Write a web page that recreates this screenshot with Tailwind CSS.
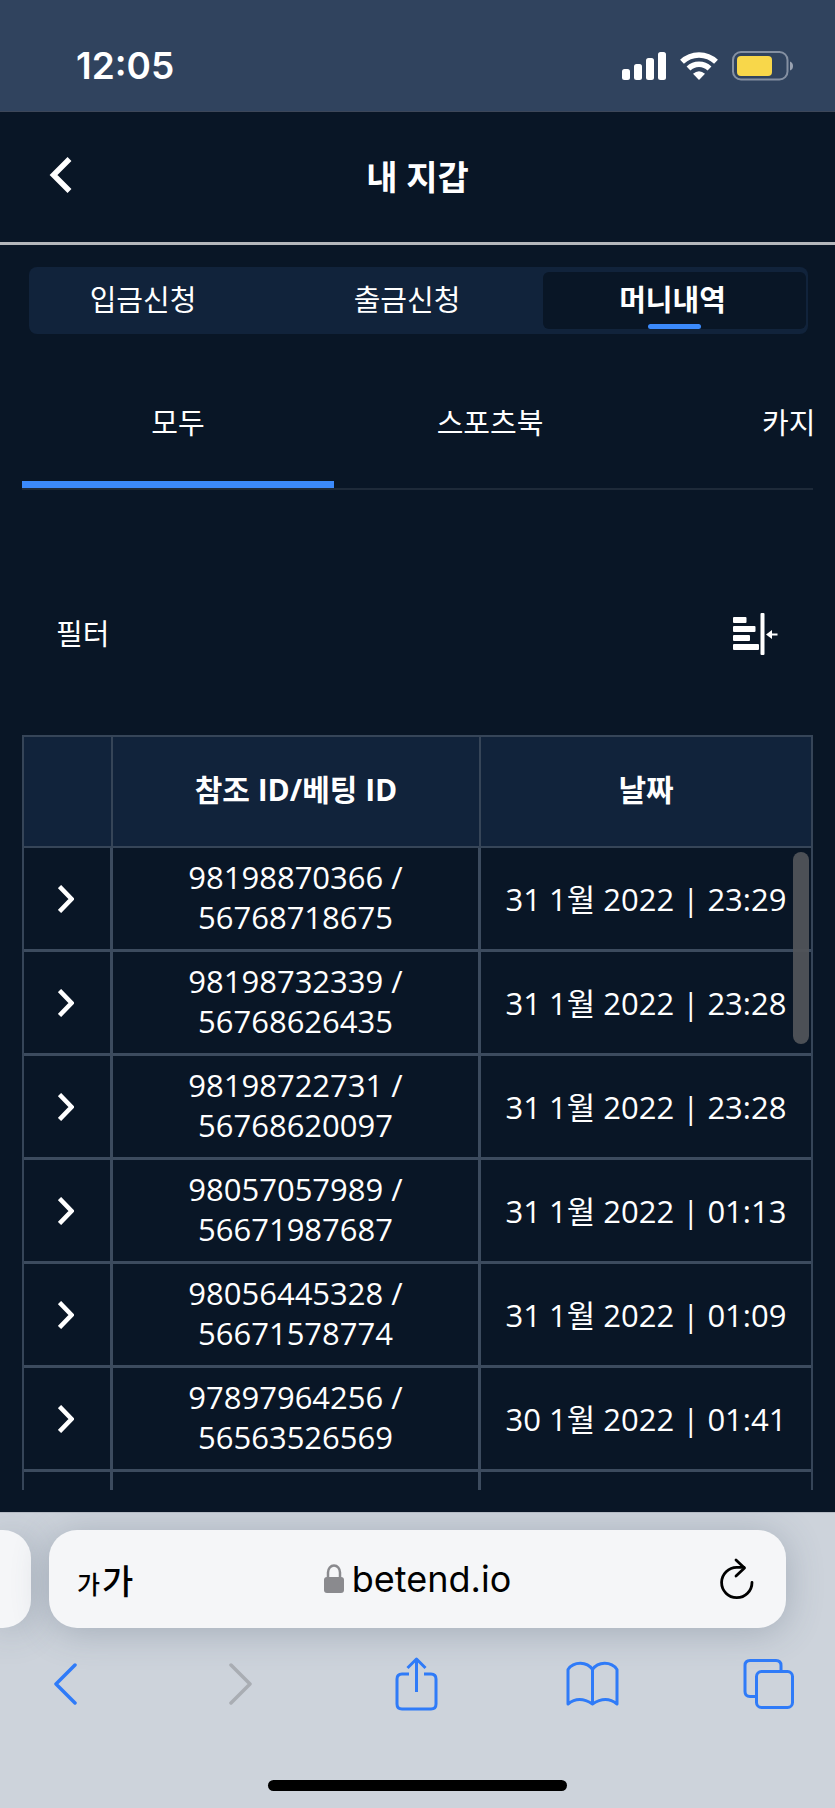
<!DOCTYPE html>
<html lang="ko">
<head>
    <meta charset="UTF-8">
    <meta name="viewport" content="width=device-width, initial-scale=1.0">
    <title>내 지갑</title>
    <script src="https://cdn.jsdelivr.net/npm/@tailwindcss/browser@4"></script>
</head>
<body class="h-screen flex flex-col overflow-hidden bg-[#091626] text-white font-['Open_Sans','Noto_Sans_CJK_KR',sans-serif]">
    <!-- status bar -->
    <div class="h-28 shrink-0 flex items-center justify-between bg-[#30435e] border-b border-[#3d4759] pl-19 pr-[41px] pt-5">
        <span class="font-['Inter',sans-serif] font-semibold text-[37px] leading-11">12:05</span>
        <div class="flex items-center gap-3.5">
            <svg class="w-11 h-7" viewBox="0 0 44 28" fill="#fff">
                <rect x="0" y="17" width="8" height="11" rx="2.500"/>
                <rect x="12" y="12" width="8" height="16" rx="2.500"/>
                <rect x="24" y="6" width="8" height="22" rx="2.500"/>
                <rect x="36" y="0" width="8" height="28" rx="2.500"/>
            </svg>
            <svg class="w-[38px] h-7" viewBox="0 0 38 28" fill="none" stroke="#fff" stroke-width="5.500">
                <path d="M2 9.800a24.500 24.500 0 0 1 34 0"/>
                <path d="M8.500 16.500a15 15 0 0 1 21 0"/>
                <path d="M19 28l-6-6.300q6-5 12 0z" fill="#fff" stroke="none"/>
            </svg>
            <svg class="w-[62px] h-[30px]" viewBox="0 0 62 30" fill="none">
                <rect x="1" y="1" width="54.500" height="27.500" rx="8" stroke="#8490a2" stroke-width="2"/>
                <rect x="5" y="5" width="35" height="20" rx="4" fill="#f8d74a"/>
                <path d="M58 10.500q3 1 3 4.500t-3 4.500z" fill="#9aa3b2"/>
            </svg>
        </div>
    </div>

    <header class="h-[133px] shrink-0 grid grid-cols-[1fr_auto_1fr] items-center border-b-3 border-[#b4b7bb] px-12">
        <button type="button" aria-label="뒤로" class="justify-self-start pb-1">
            <svg class="w-6 h-9" viewBox="0 0 24 36" fill="none" stroke="#fff" stroke-width="5.500"><path d="M21.500 2L5.500 18l16 16"/></svg>
        </button>
        <h1 class="text-[34px] leading-12 font-bold">내 지갑</h1>
    </header>

    <main class="flex-1 min-h-0 flex flex-col px-[22px] pt-[22px] pb-[22px]">
        <nav class="shrink-0 grid grid-cols-[1fr_1fr_263px] h-[67px] ml-[7px] mr-[5px] p-0.5 rounded-lg bg-[#11233b] text-[29px]">
            <button type="button" class="pr-8 pb-0.5">입금신청</button>
            <button type="button" class="pr-4 pb-0.5">출금신청</button>
            <button type="button" class="relative my-[3px] pr-1 pb-0.5 rounded-md bg-[#091626] font-bold">머니내역
                <span class="absolute bottom-0 inset-x-0 mx-auto w-[53px] h-[5px] rounded-sm bg-[#3b8afc]"></span>
            </button>
        </nav>

        <div class="shrink-0 mt-11 h-28 flex overflow-hidden border-b-2 border-[#1e2a39] text-[29px]">
            <button type="button" class="w-[312px] shrink-0 pb-3.5 border-b-7 border-[#3b8afc]">모두</button>
            <button type="button" class="w-[312px] shrink-0 pb-5">스포츠북</button>
            <button type="button" class="w-[312px] shrink-0 pb-5">카지노</button>
        </div>

        <div class="shrink-0 h-[245px] flex items-center justify-between pl-[34px] pr-[35px] pt-[42px]">
            <span class="text-[29px]">필터</span>
            <button type="button" aria-label="필터">
                <svg class="w-[45px] h-[42px]" viewBox="0 0 45 42" fill="#fff">
                    <rect x="0" y="4" width="13.500" height="6" rx="1"/>
                    <rect x="0" y="13" width="22.500" height="6" rx="1"/>
                    <rect x="0" y="22" width="17" height="6" rx="1"/>
                    <rect x="0" y="31" width="26" height="6" rx="1"/>
                    <rect x="27.500" y="0" width="4" height="42" rx="1"/>
                    <path d="M33 21.500l6-4.500v3.500h5.500v2H39v3.500z"/>
                </svg>
            </button>
        </div>

        <div class="relative flex-1 min-h-0 overflow-hidden border-2 border-b-0 border-[#364558]">
            <table class="w-full table-fixed border-separate border-spacing-0 text-[31px] leading-10 text-center">
                <colgroup>
                    <col class="w-[89px]">
                    <col class="w-[368px]">
                    <col>
                </colgroup>
                <thead class="bg-[#11233b] text-[30px]">
                    <tr>
                        <th class="h-[111px] border-r-2 border-b-2 border-[#364558]"></th>
                        <th class="border-r-2 border-b-2 border-[#364558] pb-1 font-bold">참조 ID/베팅 ID</th>
                        <th class="border-b-2 border-[#364558] pb-1 font-bold">날짜</th>
                    </tr>
                </thead>
                <tbody id="history"></tbody>
            </table>
            <!-- scroll thumb -->
            <div class="absolute top-[115px] right-0.5 w-4 h-48 rounded-full bg-[#505359]/95"></div>
        </div>
    </main>

    <!-- browser bar -->
    <footer class="h-[296px] shrink-0 flex flex-col overflow-hidden bg-[#cdd3db] border-t border-[#b4bac3] text-black">
        <div class="mt-[17px] flex gap-[18px] h-[98px]">
            <div class="w-[31px] rounded-r-[28px] bg-[#f5f6f8] shadow-[0_4px_36px_rgba(70,85,105,0.3)]"></div>
            <div class="flex-1 mr-[49px] px-7 grid grid-cols-[1fr_auto_1fr] items-center rounded-[28px] bg-[#f5f6f8] shadow-[0_4px_36px_rgba(70,85,105,0.3)]">
                <button type="button" aria-label="글자 크기" class="justify-self-start flex items-baseline gap-0.5 font-['Noto_Sans_CJK_KR',sans-serif] font-medium">
                    <span class="text-[25px]">가</span><span class="text-[34px]">가</span>
                </button>
                <div class="flex items-center gap-2">
                    <svg class="w-5 h-[30px]" viewBox="0 0 20 30" fill="none">
                        <path d="M4 14V8.500a6 7 0 0 1 12 0V14" stroke="#8a8a8e" stroke-width="2.500"/>
                        <rect x="0" y="13" width="20" height="16" rx="3" fill="#8a8a8e"/>
                    </svg>
                    <input type="text" aria-label="주소" value="betend.io" class="field-sizing-content bg-transparent font-['Inter',sans-serif] text-[36px] leading-12 outline-none">
                </div>
                <button type="button" aria-label="새로고침" class="justify-self-end mr-1">
                    <svg class="w-[34px] h-[42px]" viewBox="0 0 34 42" fill="none" stroke="#000" stroke-width="2.800" stroke-linecap="round" stroke-linejoin="round">
                        <path d="M32 24.500A15.200 15.200 0 1 1 17 9.300h7"/>
                        <path d="M16 2l8.500 8-8.500 8"/>
                    </svg>
                </button>
            </div>
        </div>
        <div class="mt-6 h-16 flex items-center justify-between pl-[38px] pr-10 text-[#2f7bf8]">
            <button type="button" aria-label="이전" class="w-[53px] flex justify-center">
                <svg class="w-6 h-[42px]" viewBox="0 0 24 42" fill="none" stroke="currentColor" stroke-width="3.500" stroke-linecap="round" stroke-linejoin="round"><path d="M22 2L3 21l19 19"/></svg>
            </button>
            <button type="button" aria-label="다음" disabled class="w-[53px] flex justify-center text-[#a9adb3]">
                <svg class="w-6 h-[42px]" viewBox="0 0 24 42" fill="none" stroke="currentColor" stroke-width="3.500" stroke-linecap="round" stroke-linejoin="round"><path d="M2 2l19 19L2 40"/></svg>
            </button>
            <button type="button" aria-label="공유" class="w-[53px] flex justify-center">
                <svg class="w-[43px] h-[54px]" viewBox="0 0 43 54" fill="none" stroke="currentColor" stroke-width="3" stroke-linejoin="round">
                    <path d="M14 17H7q-5 0-5 5v25q0 5 5 5h29q5 0 5-5V22q0-5-5-5h-7"/>
                    <path d="M21.500 35V2M12.500 11l9-9 9 9"/>
                </svg>
            </button>
            <button type="button" aria-label="책갈피" class="w-[53px] flex justify-center">
                <svg class="w-[53px] h-[46px]" viewBox="0 0 53 46" fill="none" stroke="currentColor" stroke-width="3" stroke-linejoin="round">
                    <path d="M26.500 8.500C21 .500 8 0 2 8.500V43q11-9 24.500 0q13.500-9 24.500 0V8.500C45 0 32 .500 26.500 8.500zM26.500 8.500V43"/>
                </svg>
            </button>
            <button type="button" aria-label="탭" class="w-[53px] flex justify-center">
                <svg class="w-[51px] h-[50px]" viewBox="0 0 51 50" fill="none" stroke="currentColor" stroke-width="3">
                    <rect x="13.500" y="12.500" width="36" height="36" rx="5"/>
                    <path d="M38 12V6.500q0-5-5-5H7q-5 0-5 5v26q0 5 5 5h6"/>
                </svg>
            </button>
        </div>
        <div class="mt-16 mx-auto w-[299px] h-[11px] shrink-0 rounded-full bg-black"></div>
    </footer>

    <script>
        const history_rows = [
            ['98198870366', '56768718675', '31', '23:29'],
            ['98198732339', '56768626435', '31', '23:28'],
            ['98198722731', '56768620097', '31', '23:28'],
            ['98057057989', '56671987687', '31', '01:13'],
            ['98056445328', '56671578774', '31', '01:09'],
            ['97897964256', '56563526569', '30', '01:41'],
        ];

        const filled = history_rows.map(([ref, bet, day, time]) => `
            <tr>
                <td class="h-[104px] pr-0.5 border-r-3 border-b-3 border-[#3c4b5e]">
                    <button type="button" aria-label="상세 보기" class="block mx-auto">
                        <svg class="w-4 h-7" viewBox="0 0 16 28" fill="none" stroke="#fff" stroke-width="4.500"><path d="M1.500 1.500L13.500 14l-12 12.500"/></svg>
                    </button>
                </td>
                <td class="pb-1 border-r-3 border-b-3 border-[#3c4b5e]">${ref} /<br>${bet}</td>
                <td class="border-b-3 border-[#3c4b5e] whitespace-nowrap">${day} 1월 2022 | ${time}</td>
            </tr>`).join('');

        const next = `
            <tr>
                <td class="h-[104px] border-r-3 border-[#3c4b5e]"></td>
                <td class="border-r-3 border-[#3c4b5e]"></td>
                <td></td>
            </tr>`;

        document.getElementById('history').innerHTML = filled + next;
    </script>
</body>
</html>
